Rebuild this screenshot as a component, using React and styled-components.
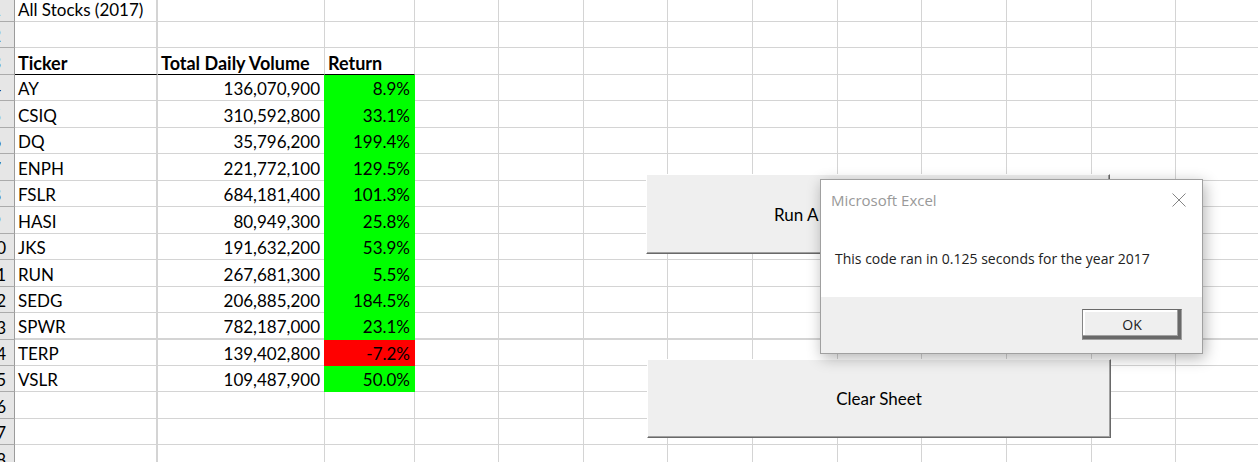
import React from "react";
import styled, { createGlobalStyle, css } from "styled-components";

const GlobalStyle = createGlobalStyle`
  *, *::before, *::after { box-sizing: border-box; }
  body { margin: 0; background: #fff; }
`;

const Sheet = styled.main`
  position: relative;
  width: 100%;
  height: 100vh;
  overflow: hidden;
  background: #fff;
  color: #000;
  font-family: Lato, "Liberation Sans", sans-serif;
  font-size: 17px;
`;

const Grid = styled.table`
  width: 100%;
  table-layout: fixed;
  border-collapse: separate;
  border-spacing: 0;
`;

const Col = styled.col`
  width: ${(p) => (p.$w ? `${p.$w}px` : "auto")};
`;

const Row = styled.tr`
  height: ${(p) => p.$h}px;
`;

const line = css`
  line-height: 20px;
  white-space: nowrap;
  vertical-align: bottom;
`;

const RowNumber = styled.th`
  ${line}
  padding: 0 0 1px;
  overflow: hidden;
  background: #e6e6e6;
  border-right: 1px solid #9b9b9b;
  border-bottom: 1px solid #ababab;
  font-weight: 400;
`;

const RowDigits = styled.span`
  display: flex;
  justify-content: flex-end;
  padding-right: ${(p) => (p.$single ? 13 : 8)}px;
`;

const fills = { green: "#00ff00", red: "#ff0000" };

const Cell = styled.td`
  ${line}
  padding: 0 4px 1px 3px;
  text-align: ${(p) => (p.$right ? "right" : "left")};
  border-right: ${(p) => (p.$wide ? 2 : 1)}px solid #d4d4d4;
  border-bottom: ${(p) => (p.$thick ? 2 : 1)}px solid #d4d4d4;
  ${(p) =>
    p.$fill &&
    css`
      background: ${fills[p.$fill]};
      border-color: ${fills[p.$fill]};
      box-shadow: -1px 0 0 ${fills[p.$fill]};
    `}
  &:last-child {
    border-right: 0;
  }
`;

const HeadCell = styled.th`
  ${line}
  padding: 0 3px 1px;
  font-weight: 700;
  font-size: 18px;
  text-align: left;
  border-right: ${(p) => (p.$wide ? 2 : 1)}px solid #d4d4d4;
  border-bottom: 1px solid #000;
`;

const SheetButton = styled.button`
  position: absolute;
  left: ${(p) => p.$x}px;
  top: ${(p) => p.$y}px;
  width: 464px;
  height: ${(p) => p.$h}px;
  padding: 0 0 0 ${(p) => p.$indent || 0}px;
  text-align: ${(p) => (p.$indent ? "left" : "center")};
  background: #efefef;
  border: 1px solid;
  border-color: #fff #696969 #696969 #fff;
  box-shadow: inset -1px -1px 0 #a0a0a0;
  font: inherit;
  color: #000;
`;

const Dialog = styled.section`
  position: absolute;
  left: 820px;
  top: 179px;
  width: 383px;
  display: flex;
  flex-direction: column;
  background: #fff;
  border: 1px solid #a0a0a0;
  box-shadow: 2px 4px 14px rgba(0, 0, 0, 0.3);
  font-family: "Open Sans", "Noto Sans", sans-serif;
`;

const TitleBar = styled.header`
  display: flex;
  align-items: center;
  justify-content: space-between;
  height: 39px;
  padding: 0 16px 0 10px;
`;

const Title = styled.h1`
  margin: 0;
  font-size: 15px;
  font-weight: 400;
  color: #999;
`;

const CloseButton = styled.button`
  display: flex;
  padding: 0;
  border: 0;
  background: none;
  color: #858585;
`;

const Message = styled.p`
  margin: 0;
  padding: 29px 14px 28px;
  font-size: 14px;
  font-weight: 500;
  line-height: 21px;
  white-space: nowrap;
  color: #222;
`;

const Footer = styled.footer`
  display: flex;
  justify-content: flex-end;
  padding: 12px 20px 13px;
  background: #efefef;
`;

const OkButton = styled.button`
  width: 100px;
  height: 31px;
  padding: 0;
  background: #efefef;
  border: 1px solid #a0a0a0;
  border-top-color: #696969;
  border-left-color: #858585;
  box-shadow: inset -3px -3px 0 #696969, inset -4px -4px 0 #a0a0a0,
    inset 2px 2px 0 #fff;
  font: inherit;
  font-size: 14px;
  font-weight: 500;
  color: #222;
`;

const columns = [15, 143, 167, 90, 84, 85, 84, 85, 85, 84, 85, 85, 84, null];
const emptyColumns = columns.slice(4);

const rows = [
  { h: 22, a: "All Stocks (2017)" },
  { h: 26 },
  { h: 27, head: ["Ticker", "Total Daily Volume", "Return"] },
  { h: 26, a: "AY", b: "136,070,900", c: "8.9%" },
  { h: 27, a: "CSIQ", b: "310,592,800", c: "33.1%" },
  { h: 26, a: "DQ", b: "35,796,200", c: "199.4%" },
  { h: 27, a: "ENPH", b: "221,772,100", c: "129.5%" },
  { h: 26, a: "FSLR", b: "684,181,400", c: "101.3%" },
  { h: 27, a: "HASI", b: "80,949,300", c: "25.8%" },
  { h: 26, a: "JKS", b: "191,632,200", c: "53.9%" },
  { h: 27, a: "RUN", b: "267,681,300", c: "5.5%" },
  { h: 26, a: "SEDG", b: "206,885,200", c: "184.5%" },
  { h: 27, a: "SPWR", b: "782,187,000", c: "23.1%", thick: true },
  { h: 26, a: "TERP", b: "139,402,800", c: "-7.2%" },
  { h: 26, a: "VSLR", b: "109,487,900", c: "50.0%" },
  { h: 27 },
  { h: 26 },
  { h: 27 },
];

function SheetRow({ row, number }) {
  const fill = row.c && (row.c.startsWith("-") ? "red" : "green");
  return (
    <Row $h={row.h}>
      <RowNumber scope="row">
        <RowDigits $single={number < 10}>{number}</RowDigits>
      </RowNumber>
      {row.head ? (
        row.head.map((label, i) => (
          <HeadCell key={label} scope="col" $wide={i === 0}>
            {label}
          </HeadCell>
        ))
      ) : (
        <>
          <Cell $wide $thick={row.thick}>{row.a}</Cell>
          <Cell $right $thick={row.thick}>{row.b}</Cell>
          <Cell $right $thick={row.thick} $fill={fill}>{row.c}</Cell>
        </>
      )}
      {emptyColumns.map((_, i) => (
        <Cell key={i} $thick={row.thick} />
      ))}
    </Row>
  );
}

export default function App() {
  return (
    <Sheet>
      <GlobalStyle />
      <Grid>
        <colgroup>
          {columns.map((w, i) => (
            <Col key={i} $w={w} />
          ))}
        </colgroup>
        <tbody>
          {rows.map((row, i) => (
            <SheetRow key={i} row={row} number={i + 1} />
          ))}
        </tbody>
      </Grid>
      <SheetButton type="button" $x={646} $y={174} $h={80} $indent={127}>
        Run A
      </SheetButton>
      <SheetButton type="button" $x={647} $y={359} $h={79}>
        Clear Sheet
      </SheetButton>
      <Dialog role="dialog" aria-labelledby="dialog-title">
        <TitleBar>
          <Title id="dialog-title">Microsoft Excel</Title>
          <CloseButton type="button" aria-label="Close">
            <svg width="14" height="14" viewBox="0 0 14 14" fill="none" stroke="currentColor">
              <path d="M0.5 0.5L13.5 13.5M13.5 0.5L0.5 13.5" />
            </svg>
          </CloseButton>
        </TitleBar>
        <Message>This code ran in 0.125 seconds for the year 2017</Message>
        <Footer>
          <OkButton type="button">OK</OkButton>
        </Footer>
      </Dialog>
    </Sheet>
  );
}
